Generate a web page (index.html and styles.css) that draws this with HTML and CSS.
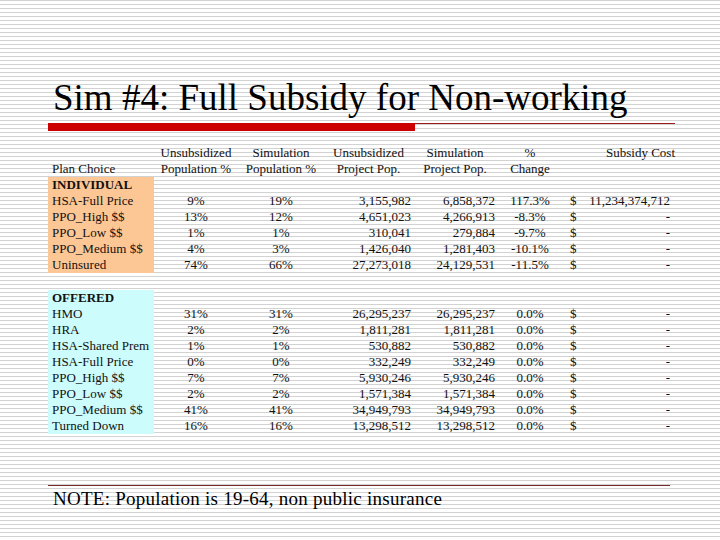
FILE: index.html
```html
<!DOCTYPE html>
<html>
<head>
<meta charset="utf-8">
<link rel="stylesheet" href="styles.css">
</head>
<body>
<div class="slide">
  <h1 class="title">Sim #4: Full Subsidy for Non-working</h1>
  <div class="rule">
    <div class="rule-red"></div>
  </div>
  <table class="data">
    <colgroup>
      <col class="c1"><col class="c2"><col class="c3"><col class="c4"><col class="c5"><col class="c6"><col class="c7"><col class="c8">
    </colgroup>
    <thead>
      <tr><th></th><th class="ctr">Unsubsidized</th><th class="ctr">Simulation</th><th class="ctr">Unsubsidized</th><th class="ctr">Simulation</th><th class="ctr">%</th><th colspan="2" class="rt">Subsidy Cost</th></tr>
      <tr><th class="lft">Plan Choice</th><th class="ctr">Population %</th><th class="ctr">Population %</th><th class="ctr">Project Pop.</th><th class="ctr">Project Pop.</th><th class="ctr">Change</th><th></th><th></th></tr>
    </thead>
    <tbody class="ind">
      <tr><td class="name b">INDIVIDUAL</td><td></td><td></td><td></td><td></td><td></td><td></td><td></td></tr>
      <tr><td class="name">HSA-Full Price</td><td class="ctr">9%</td><td class="ctr">19%</td><td class="num">3,155,982</td><td class="num">6,858,372</td><td class="ctr">117.3%</td><td class="usd">$</td><td class="cost">11,234,374,712</td></tr>
      <tr><td class="name">PPO_High $$</td><td class="ctr">13%</td><td class="ctr">12%</td><td class="num">4,651,023</td><td class="num">4,266,913</td><td class="ctr">-8.3%</td><td class="usd">$</td><td class="cost">-</td></tr>
      <tr><td class="name">PPO_Low $$</td><td class="ctr">1%</td><td class="ctr">1%</td><td class="num">310,041</td><td class="num">279,884</td><td class="ctr">-9.7%</td><td class="usd">$</td><td class="cost">-</td></tr>
      <tr><td class="name">PPO_Medium $$</td><td class="ctr">4%</td><td class="ctr">3%</td><td class="num">1,426,040</td><td class="num">1,281,403</td><td class="ctr">-10.1%</td><td class="usd">$</td><td class="cost">-</td></tr>
      <tr><td class="name">Uninsured</td><td class="ctr">74%</td><td class="ctr">66%</td><td class="num">27,273,018</td><td class="num">24,129,531</td><td class="ctr">-11.5%</td><td class="usd">$</td><td class="cost">-</td></tr>
    </tbody>
    <tbody class="spacer"><tr><td colspan="8"></td></tr></tbody>
    <tbody class="off">
      <tr><td class="name b">OFFERED</td><td></td><td></td><td></td><td></td><td></td><td></td><td></td></tr>
      <tr><td class="name">HMO</td><td class="ctr">31%</td><td class="ctr">31%</td><td class="num">26,295,237</td><td class="num">26,295,237</td><td class="ctr">0.0%</td><td class="usd">$</td><td class="cost">-</td></tr>
      <tr><td class="name">HRA</td><td class="ctr">2%</td><td class="ctr">2%</td><td class="num">1,811,281</td><td class="num">1,811,281</td><td class="ctr">0.0%</td><td class="usd">$</td><td class="cost">-</td></tr>
      <tr><td class="name">HSA-Shared Prem</td><td class="ctr">1%</td><td class="ctr">1%</td><td class="num">530,882</td><td class="num">530,882</td><td class="ctr">0.0%</td><td class="usd">$</td><td class="cost">-</td></tr>
      <tr><td class="name">HSA-Full Price</td><td class="ctr">0%</td><td class="ctr">0%</td><td class="num">332,249</td><td class="num">332,249</td><td class="ctr">0.0%</td><td class="usd">$</td><td class="cost">-</td></tr>
      <tr><td class="name">PPO_High $$</td><td class="ctr">7%</td><td class="ctr">7%</td><td class="num">5,930,246</td><td class="num">5,930,246</td><td class="ctr">0.0%</td><td class="usd">$</td><td class="cost">-</td></tr>
      <tr><td class="name">PPO_Low $$</td><td class="ctr">2%</td><td class="ctr">2%</td><td class="num">1,571,384</td><td class="num">1,571,384</td><td class="ctr">0.0%</td><td class="usd">$</td><td class="cost">-</td></tr>
      <tr><td class="name">PPO_Medium $$</td><td class="ctr">41%</td><td class="ctr">41%</td><td class="num">34,949,793</td><td class="num">34,949,793</td><td class="ctr">0.0%</td><td class="usd">$</td><td class="cost">-</td></tr>
      <tr><td class="name">Turned Down</td><td class="ctr">16%</td><td class="ctr">16%</td><td class="num">13,298,512</td><td class="num">13,298,512</td><td class="ctr">0.0%</td><td class="usd">$</td><td class="cost">-</td></tr>
    </tbody>
  </table>
  <div class="note-rule"></div>
  <p class="note">NOTE: Population is 19-64, non public insurance</p>
</div>
</body>
</html>
```
FILE: styles.css
```css
html, body {
  margin: 0;
  padding: 0;
}
body {
  width: 720px;
  height: 540px;
  overflow: hidden;
  background-color: #ffffff;
  background-image: repeating-linear-gradient(to bottom, #d2d2d2 0px, #d2d2d2 1px, #ffffff 1px, #ffffff 4px);
  font-family: "Liberation Serif", "Times New Roman", serif;
  color: #111;
}
.slide {
  padding: 78px 0 0 48px;
}
.title {
  margin: 0 0 0 5px;
  font-family: "Liberation Serif", "Times New Roman", serif;
  font-weight: normal;
  font-size: 37px;
  line-height: 40px;
  color: #000;
}
.rule {
  margin-top: 5px;
  width: 627px;
  height: 8px;
  border-top: 1px solid #9a1c1c;
}
.rule-red {
  width: 367px;
  height: 8px;
  margin-top: -1px;
  background: #cc0000;
}
.data {
  margin-top: 13px;
  border-collapse: collapse;
  table-layout: fixed;
  width: 627px;
  font-size: 13px;
  line-height: 16px;
}
.data td, .data th {
  padding: 0;
  height: 16px;
  white-space: nowrap;
  font-weight: normal;
  overflow: visible;
}
.c1 { width: 106px; }
.c2 { width: 84px; }
.c3 { width: 86px; }
.c4 { width: 89px; }
.c5 { width: 84px; }
.c6 { width: 66px; }
.c7 { width: 22px; }
.c8 { width: 90px; }
.data .lft { text-align: left; padding-left: 4px; }
.data .ctr { text-align: center; }
.data .rt { text-align: right; }
.data .num { text-align: right; padding-right: 2px; }
.data .usd { text-align: left; padding-left: 7px; }
.data .cost { text-align: right; padding-right: 5px; }
.data .name { padding-left: 4px; }
.data .b { font-weight: bold; }
.ind .name { background: #fdc795; }
.off .name { background: #cdfcfd; }
.spacer td { height: 17px; }
.note-rule {
  margin-top: 51px;
  width: 622px;
  height: 1px;
  background: #7a2a2a;
}
.note {
  margin: 2px 0 0 5px;
  font-size: 19px;
  line-height: 22px;
  letter-spacing: 0.25px;
  color: #000;
}
```
